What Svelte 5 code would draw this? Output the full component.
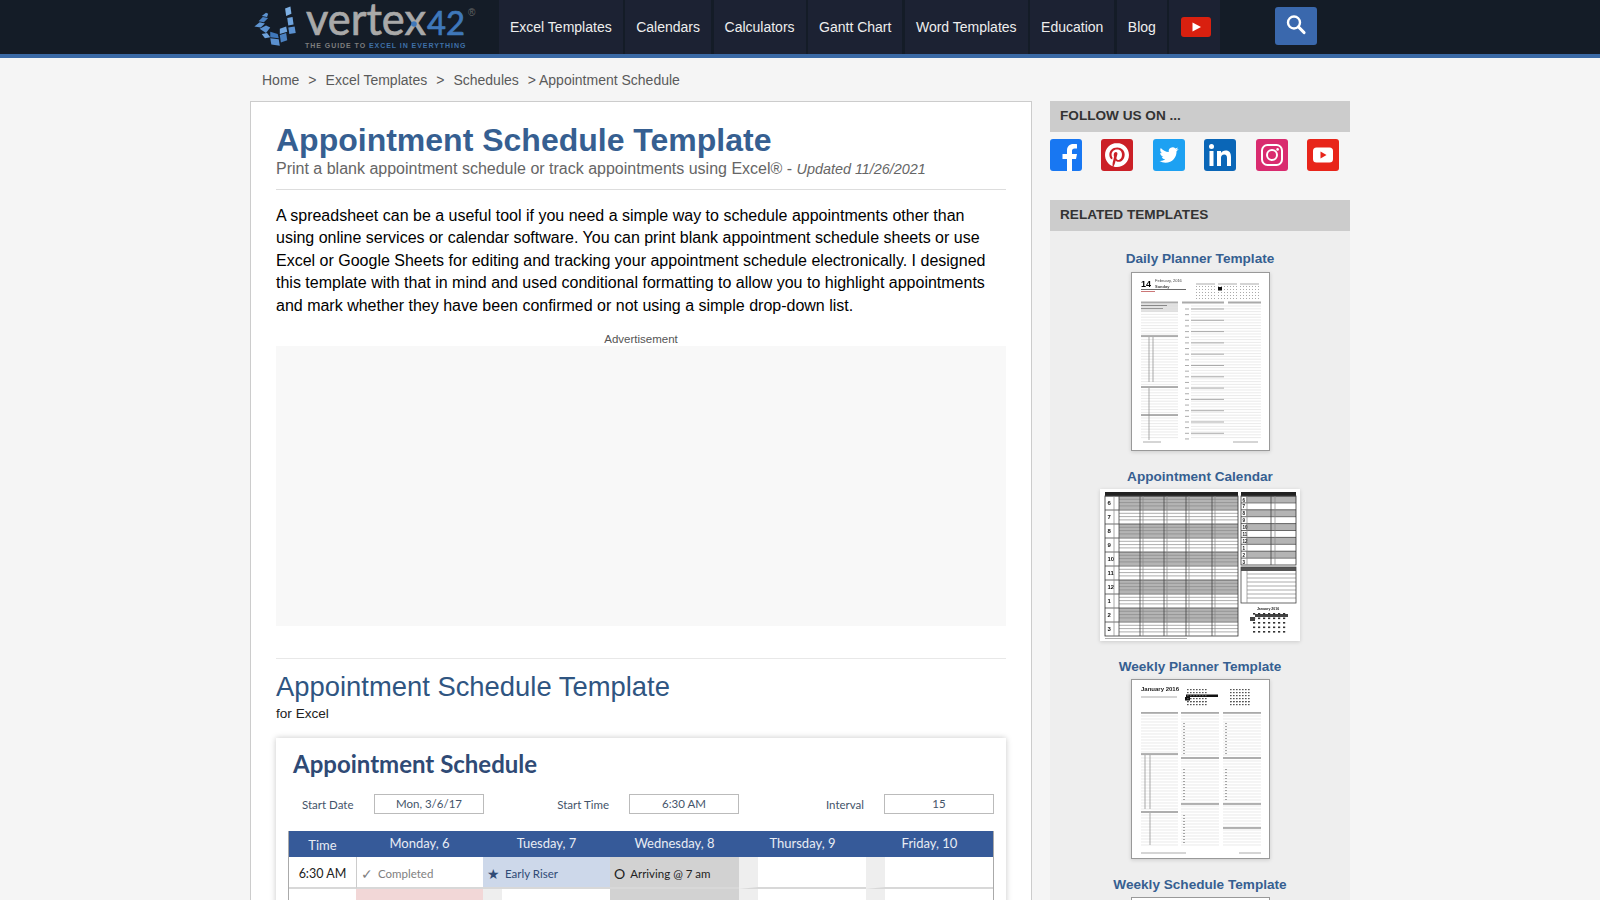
<script>
  const nav = ['Excel Templates', 'Calendars', 'Calculators', 'Gantt Chart', 'Word Templates', 'Education', 'Blog'];
  const range = (from, to, step) => {
    const out = [];
    for (let v = from; v <= to; v += step) out.push(v);
    return out;
  };
  // logo tiles, in px from the left edge of the logo
  const tiles = [
    ['6,26 11,22 16,23 12,27', '#5f95d2'],
    ['10,21 14,17 19,18 15,22', '#4a80c0'],
    ['13,16 17,13 19,14 18,17', '#5f95d2'],
    ['11,28 17,25 21,27 17,32', '#5a90cf'],
    ['13,33 18,32 21,36 16,37', '#6fa3dc'],
    ['21,31 28,33 29,37 21,36', '#3f78bb'],
    ['21,37 29,38 30,44 22,43', '#5a90cf'],
    ['30,34 36,32 37,39 31,41', '#4a80c0'],
    ['30,28 36,26 37,31 30,33', '#6fa3dc'],
    ['38,27 44,26 45,32 39,33', '#5a90cf'],
    ['37,18 42,17 43,24 38,25', '#6fa3dc'],
    ['35,9 40,7 41,14 36,16', '#7eb0e4']
  ];
  const miniDots = (x, y) => range(0, 4, 1).flatMap((r) => range(0, 6, 1).map((c) => [x + c * 3, y + r * 3]));
  const calHours = [6, 7, 8, 9, 10, 11, 12, 1, 2, 3];
  const calCols = [40, 64, 86, 112];
  const schedule = [
    { time: '6:30 AM', cells: [
      { cls: 'plain', mark: '✓', text: 'Completed', textCls: 'muted' },
      { cls: 'blue', mark: '★', text: 'Early Riser', textCls: 'navy' },
      { cls: 'grey', mark: 'O', text: 'Arriving @ 7 am', textCls: 'dark' },
      { cls: 'strip' }, { cls: 'strip' }
    ] },
    { time: '', cells: [{ cls: 'pink' }, { cls: 'strip' }, { cls: 'grey' }, { cls: 'strip' }, { cls: 'strip' }] }
  ];
</script>

<header class="topbar">
  <div class="topbar-inner">
    <a class="logo" href="#top" aria-label="Vertex42">
      <svg width="230" height="54" viewBox="0 0 230 54">
        <g transform="translate(-2 -1) scale(1.06)">
          {#each tiles as [points, fill]}
            <polygon {points} {fill} />
          {/each}
        </g>
        <text x="56" y="35" class="logo-word" textLength="120" lengthAdjust="spacingAndGlyphs">vertex</text>
        <circle cx="164" cy="24" r="2.800" fill="#3f78ba" />
        <text x="177" y="35" class="logo-num" textLength="38" lengthAdjust="spacingAndGlyphs">42</text>
        <text x="218" y="16" class="logo-reg">®</text>
        <text x="55" y="48" class="logo-tag">THE GUIDE TO <tspan fill="#3f70a8">EXCEL IN EVERYTHING</tspan></text>
      </svg>
    </a>
    <nav class="menu">
      {#each nav as item}
        <a href="#top">{item}</a>
      {/each}
      <a href="#top" class="yt" aria-label="YouTube">
        <svg width="30" height="20" viewBox="0 0 30 20">
          <rect width="30" height="20" rx="3" fill="#d9200f" />
          <polygon points="11.500,5.500 20,10 11.500,14.500" fill="#fff" />
        </svg>
      </a>
    </nav>
    <button class="search" aria-label="Search">
      <svg width="24" height="24" viewBox="0 0 24 24" fill="none" stroke="#fff">
        <circle cx="10" cy="8.500" r="6" stroke-width="2.400" />
        <line x1="14.600" y1="13" x2="20" y2="18.500" stroke-width="3.200" stroke-linecap="round" />
      </svg>
    </button>
  </div>
</header>

<div class="page">
  <div class="crumbs">
    <a href="#top">Home</a><span class="sep">&gt;</span><a href="#top">Excel Templates</a><span class="sep">&gt;</span><a href="#top">Schedules</a><span class="sep last">&gt;</span>Appointment Schedule
  </div>

  <div class="columns">
    <main class="card">
      <h1>Appointment Schedule Template</h1>
      <p class="sub">Print a blank appointment schedule or track appointments using Excel® - <em>Updated 11/26/2021</em></p>
      <hr class="rule-top" />
      <p class="intro">A spreadsheet can be a useful tool if you need a simple way to schedule appointments other than using online services or calendar software. You can print blank appointment schedule sheets or use Excel or Google Sheets for editing and tracking your appointment schedule electronically. I designed this template with that in mind and used conditional formatting to allow you to highlight appointments and mark whether they have been confirmed or not using a simple drop-down list.</p>
      <div class="ad-label">Advertisement</div>
      <div class="ad"></div>
      <hr class="rule-mid" />
      <h2>Appointment Schedule Template</h2>
      <p class="for">for Excel</p>

      <div class="sheet">
        <div class="sheet-title">Appointment Schedule</div>
        <div class="fields">
          <span class="lbl first">Start Date</span><span class="box">Mon, 3/6/17</span>
          <span class="lbl">Start Time</span><span class="box">6:30 AM</span>
          <span class="lbl">Interval</span><span class="box">15</span>
        </div>
        <div class="table">
          <div class="th time">Time</div>
          <div class="th">Monday, 6</div>
          <div class="th">Tuesday, 7</div>
          <div class="th">Wednesday, 8</div>
          <div class="th">Thursday, 9</div>
          <div class="th">Friday, 10</div>
          {#each schedule as row}
            <div class="td tm">{row.time}</div>
            {#each row.cells as cell}
              <div class="td {cell.cls}">
                {#if cell.text}
                  <span class="mark {cell.textCls}">{cell.mark}</span><span class={cell.textCls}>{cell.text}</span>
                {/if}
              </div>
            {/each}
          {/each}
        </div>
      </div>
    </main>

    <aside class="side">
      <div class="side-head">Follow us on ...</div>
      <div class="social">
        <a href="#top" aria-label="Facebook"><svg width="32" height="32" viewBox="0 0 32 32">
          <rect width="32" height="32" rx="3" fill="#1877f2" />
          <path d="M22 32V20h4l1-5h-5v-3c0-1.600.8-2.500 2.600-2.500H27V5.200C26.200 5 24.800 5 23.400 5 19.500 5 17 7.400 17 11.500V15h-4.500v5H17v12z" fill="#fff" />
        </svg></a>
        <a href="#top" aria-label="Pinterest"><svg width="32" height="32" viewBox="0 0 32 32">
          <rect width="32" height="32" rx="3" fill="#cb2027" />
          <g transform="translate(4 4)"><path d="M12.017 0C5.396 0 .029 5.367.029 11.987c0 5.079 3.158 9.417 7.618 11.162-.105-.949-.199-2.403.041-3.439.219-.937 1.406-5.957 1.406-5.957s-.359-.72-.359-1.781c0-1.663.967-2.911 2.168-2.911 1.024 0 1.518.769 1.518 1.688 0 1.029-.653 2.567-.992 3.992-.285 1.193.6 2.165 1.775 2.165 2.128 0 3.768-2.245 3.768-5.487 0-2.861-2.063-4.869-5.008-4.869-3.41 0-5.409 2.562-5.409 5.199 0 1.033.394 2.143.889 2.741.099.12.112.225.085.345-.09.375-.293 1.199-.334 1.363-.053.225-.172.271-.401.165-1.495-.69-2.433-2.878-2.433-4.646 0-3.776 2.748-7.252 7.92-7.252 4.158 0 7.392 2.967 7.392 6.923 0 4.135-2.607 7.462-6.233 7.462-1.214 0-2.354-.629-2.758-1.379l-.749 2.848c-.269 1.045-1.004 2.352-1.498 3.146 1.123.345 2.306.535 3.55.535 6.607 0 11.985-5.365 11.985-11.987C23.97 5.39 18.592.026 11.985.026L12.017 0z" fill="#fff" /></g>
        </svg></a>
        <a href="#top" aria-label="Twitter"><svg width="32" height="32" viewBox="0 0 32 32">
          <rect width="32" height="32" rx="3" fill="#1da1f2" />
          <g transform="translate(6.500 6.500) scale(.79)"><path d="M23.953 4.57a10 10 0 01-2.825.775 4.958 4.958 0 002.163-2.723c-.951.555-2.005.959-3.127 1.184a4.92 4.92 0 00-8.384 4.482C7.69 8.095 4.067 6.13 1.64 3.162a4.822 4.822 0 00-.666 2.475c0 1.71.87 3.213 2.188 4.096a4.904 4.904 0 01-2.228-.616v.06a4.923 4.923 0 003.946 4.827 4.996 4.996 0 01-2.212.085 4.936 4.936 0 004.604 3.417 9.867 9.867 0 01-6.102 2.105c-.39 0-.779-.023-1.17-.067a13.995 13.995 0 007.557 2.209c9.053 0 13.998-7.496 13.998-13.985 0-.21 0-.42-.015-.63A9.935 9.935 0 0024 4.59z" fill="#fff" /></g>
        </svg></a>
        <a href="#top" aria-label="LinkedIn"><svg width="32" height="32" viewBox="0 0 32 32">
          <rect width="32" height="32" rx="3" fill="#0a66b7" />
          <circle cx="7.500" cy="7.500" r="2.500" fill="#fff" />
          <rect x="5.500" y="12" width="4" height="15" fill="#fff" />
          <path d="M13 12h4v2c.8-1.400 2.500-2.400 4.600-2.400 4 0 5.400 2.600 5.400 6.400v9h-4v-8c0-2-.7-3.500-2.800-3.500s-3.200 1.500-3.200 3.500v8h-4z" fill="#fff" />
        </svg></a>
        <a href="#top" aria-label="Instagram"><svg width="32" height="32" viewBox="0 0 32 32">
          <rect width="32" height="32" rx="3" fill="#d92b6f" />
          <rect x="6" y="6" width="20" height="20" rx="5.500" fill="none" stroke="#fff" stroke-width="2" />
          <circle cx="16" cy="16" r="5" fill="none" stroke="#fff" stroke-width="2" />
          <circle cx="21.600" cy="10.400" r="1.300" fill="#fff" />
        </svg></a>
        <a href="#top" aria-label="YouTube"><svg width="32" height="32" viewBox="0 0 32 32">
          <rect width="32" height="32" rx="3" fill="#e8251a" />
          <rect x="6" y="8.500" width="20" height="15" rx="3.500" fill="#fff" />
          <polygon points="13.500,12.500 19.500,16 13.500,19.500" fill="#e8251a" />
        </svg></a>
      </div>

      <div class="side-head related">Related Templates</div>
      <div class="rel-list">
        <a class="rel-title" href="#top">Daily Planner Template</a>
        <svg class="thumb" width="139" height="179" viewBox="0 0 139 179">
          <rect x=".5" y=".5" width="138" height="178" fill="#fff" stroke="#999" />
          <text x="10" y="15" class="t-big">14</text>
          <text x="24" y="10" class="t-sm">February, 2016</text>
          <text x="24" y="16" class="t-sm b">Sunday</text>
          <line x1="10" y1="17.500" x2="55" y2="17.500" class="ln-d" />
          <line x1="10" y1="19.500" x2="24" y2="19.500" class="ln-r" />
          {#each [65, 87, 109] as x}
            <line x1={x} y1="12" x2={x + 19} y2="12" class="ln-m" />
            {#each miniDots(x, 14) as [dx, dy]}
              <rect x={dx} y={dy} width="1" height="1" fill="#aaa" />
            {/each}
          {/each}
          <rect x="87" y="15" width="4" height="3.500" fill="#111" />
          {#each [[10, 47], [51, 93], [97, 130]] as [a, b]}
            <rect x={a} y="29.500" width={b - a} height="2" fill="#aaa" />
          {/each}
          <rect x="10" y="32" width="37" height="8" fill="#e2e2e2" />
          <line x1="10" y1="33.500" x2="36" y2="33.500" class="ln-d" />
          <line x1="10" y1="36.500" x2="32" y2="36.500" class="ln-d" />
          {#each range(34, 168, 2.800) as y}
            <line x1="60" y1={y} x2="130" y2={y} class="ln-l" />
            <line x1="10" y1={y} x2="47" y2={y} class="ln-l" />
          {/each}
          {#each range(37, 168, 11.300) as y}
            <line x1="60" y1={y} x2="93" y2={y} class="ln-m" />
          {/each}
          {#each [64, 115, 143] as y}
            <line x1="10" y1={y} x2="47" y2={y} class="ln-d" />
          {/each}
          <line x1="18" y1="65" x2="18" y2="110" class="ln-m" />
          <line x1="22" y1="65" x2="22" y2="110" class="ln-m" />
          <line x1="18" y1="116" x2="18" y2="168" class="ln-m" />
          {#each range(37, 168, 5.650) as y}
            <line x1="54" y1={y} x2="58" y2={y} class="ln-m" />
          {/each}
          <line x1="12" y1="170" x2="30" y2="170" class="ln-m" />
          <line x1="102" y1="170" x2="127" y2="170" class="ln-m" />
        </svg>

        <a class="rel-title" href="#top">Appointment Calendar</a>
        <svg class="thumb flat" width="200" height="152" viewBox="0 0 200 152">
          <rect width="200" height="152" fill="#fff" />
          <rect x="5" y="3" width="133" height="4" fill="#222" />
          <rect x="141" y="3" width="55" height="4" fill="#222" />
          {#each calHours as h, i}
            <g>
              {#if i % 2 === 0}
                <rect x="19" y={7 + i * 14} width="119" height="13.500" fill="#b4b4b4" />
              {/if}
              {#each range(3.300, 13, 3.300) as d}
                <line x1="19" y1={7 + i * 14 + d} x2="138" y2={7 + i * 14 + d} class="ln-m" />
              {/each}
              <line x1="5" y1={7 + i * 14} x2="138" y2={7 + i * 14} class="ln-d" />
              <text x="7.500" y={16 + i * 14} class="t-hr">{h}</text>
            </g>
          {/each}
          <rect x="5" y="7" width="133" height="140" fill="none" stroke="#333" stroke-width=".8" />
          <line x1="14" y1="7" x2="14" y2="147" class="ln-m" />
          <line x1="19" y1="7" x2="19" y2="147" class="ln-d" />
          {#each calCols as x}
            <line x1={x} y1="7" x2={x} y2="147" class="ln-d" />
            <line x1={x + 3} y1="7" x2={x + 3} y2="147" class="ln-m" />
          {/each}
          {#each range(0, 9, 1) as i}
            <rect x="146" y={7 + i * 6.900} width="50" height="6.500" fill={i % 2 === 0 ? '#b4b4b4' : '#fff'} />
            <line x1="141" y1={7 + i * 6.900} x2="196" y2={7 + i * 6.900} class="ln-d" />
            <text x="142.500" y={12.500 + i * 6.900} class="t-hr s">{calHours[i]}</text>
          {/each}
          <rect x="141" y="7" width="55" height="69" fill="none" stroke="#333" stroke-width=".8" />
          <line x1="147" y1="7" x2="147" y2="76" class="ln-m" />
          <line x1="171" y1="7" x2="171" y2="76" class="ln-d" />
          <line x1="175" y1="7" x2="175" y2="76" class="ln-m" />
          <rect x="141" y="78" width="55" height="4" fill="#555" />
          {#each range(85, 112, 4) as y}
            <line x1="147" y1={y} x2="196" y2={y} class="ln-m" />
          {/each}
          <rect x="141" y="78" width="55" height="36" fill="none" stroke="#444" stroke-width=".8" />
          <line x1="147" y1="82" x2="147" y2="114" class="ln-m" />
          <text x="168" y="121" class="t-xs" text-anchor="middle">January 2016</text>
          <rect x="155" y="125" width="33" height="3" fill="#444" />
          {#each range(0, 4, 1) as r}
            {#each range(0, 6, 1) as c}
              <rect x={153 + c * 5} y={124 + r * 4.500} width="2.200" height="1.600" fill="#333" />
            {/each}
          {/each}
          <rect x="150" y="128" width="5" height="4" fill="#444" />
          <line x1="5" y1="149.500" x2="87" y2="149.500" class="ln-m" />
        </svg>

        <a class="rel-title" href="#top">Weekly Planner Template</a>
        <svg class="thumb" width="139" height="180" viewBox="0 0 139 180">
          <rect x=".5" y=".5" width="138" height="179" fill="#fff" stroke="#999" />
          <text x="10" y="12" class="t-wk">January 2016</text>
          <line x1="10" y1="18" x2="46" y2="18" class="ln-m" />
          <rect x="55" y="15.500" width="32" height="2.500" fill="#111" />
          <rect x="54" y="18" width="5" height="3.500" fill="#111" />
          {#each [56, 97] as x}
            {#each miniDots(x, 10) as [dx, dy]}
              <rect x={dx + (x === 97 ? 2 : 0)} y={dy} width="1.600" height="1.200" fill="#555" />
            {/each}
            {#each miniDots(x, 22) as [dx, dy]}
              {#if dy < 26}
                <rect x={dx + (x === 97 ? 2 : 0)} y={dy} width="1.600" height="1.200" fill="#555" />
              {/if}
            {/each}
          {/each}
          {#each [[10, 47], [50, 88], [92, 130]] as [a, b]}
            <rect x={a} y="33" width={b - a} height="1.800" fill="#aaa" />
            {#each range(37, 166, 3) as y}
              <line x1={a} y1={y} x2={b} y2={y} class="ln-l" />
            {/each}
          {/each}
          {#each [79, 125] as y}
            <line x1="50" y1={y} x2="88" y2={y} class="ln-d" />
            <line x1="92" y1={y} x2="130" y2={y} class="ln-d" />
          {/each}
          <line x1="92" y1="149" x2="130" y2="149" class="ln-d" />
          <line x1="10" y1="75" x2="47" y2="75" class="ln-d" />
          <line x1="10" y1="133" x2="47" y2="133" class="ln-d" />
          <line x1="14" y1="76" x2="14" y2="130" class="ln-m" />
          <line x1="19" y1="76" x2="19" y2="130" class="ln-m" />
          <line x1="19" y1="134" x2="19" y2="166" class="ln-m" />
          {#each [[44, 75], [90, 121], [136, 166]] as [a, b]}
            <line x1="53" y1={a} x2="53" y2={b} stroke="#555" stroke-width="1" stroke-dasharray="1 2" />
          {/each}
          {#each [[44, 75], [90, 121]] as [a, b]}
            <line x1="95" y1={a} x2="95" y2={b} stroke="#555" stroke-width="1" stroke-dasharray="1 2" />
          {/each}
          <line x1="10" y1="174" x2="55" y2="174" class="ln-m" />
          <line x1="108" y1="174" x2="130" y2="174" class="ln-m" />
        </svg>

        <a class="rel-title" href="#top">Weekly Schedule Template</a>
        <div class="thumb-stub"></div>
      </div>
    </aside>
  </div>
</div>

<style>
  :global(html) {
    overflow: hidden;
  }

  :global(body) {
    background: #f5f5f5;
    font-family: "Liberation Sans", Arial, sans-serif;
  }

  a {
    text-decoration: none;
    color: inherit;
  }

  /* Top bar */
  .topbar {
    background: #141c27;
    border-bottom: 4px solid #3a69a5;
    height: 54px;
  }

  .topbar-inner {
    width: 1100px;
    margin: 0 auto;
    height: 54px;
    display: flex;
  }

  .logo {
    width: 249px;
    flex: none;
  }

  .logo-word {
    font-family: Lato, sans-serif;
    font-size: 44px;
    fill: #a9a9a9;
    stroke: #a9a9a9;
    stroke-width: 0.7;
  }

  .logo-num {
    font-family: Lato, sans-serif;
    font-size: 32px;
    fill: #3f78ba;
    stroke: #3f78ba;
    stroke-width: 0.7;
  }

  .logo-reg {
    font-size: 10px;
    fill: #666;
  }

  .logo-tag {
    font-family: "Liberation Sans", sans-serif;
    font-size: 7px;
    font-weight: 700;
    letter-spacing: 0.950px;
    fill: #7d7d7d;
  }

  .menu {
    display: flex;
    height: 54px;
    gap: 2.500px;
  }

  .menu a {
    display: flex;
    align-items: center;
    background: #1c2233;
    color: #eee;
    font-size: 14px;
    padding: 0 11px;
  }

  .menu .yt {
    padding: 0 9px 0 12px;
  }

  .search {
    width: 42px;
    height: 38px;
    margin: 7px 0 0 55px;
    padding: 0;
    background: #3a68ad;
    border: 0;
    border-radius: 3px;
    display: flex;
    align-items: center;
    justify-content: center;
  }

  /* Breadcrumbs */
  .page {
    width: 1100px;
    margin: 0 auto;
  }

  .crumbs {
    height: 43px;
    line-height: 44px;
    padding-left: 12px;
    font-size: 14px;
    color: #5a5a5a;
  }

  .sep {
    margin: 0 9px;
  }

  .sep.last {
    margin-right: 3px;
  }

  .columns {
    display: flex;
    gap: 18px;
    align-items: flex-start;
  }

  /* Main card */
  .card {
    width: 782px;
    box-sizing: border-box;
    background: #fff;
    border: 1px solid #ccc;
    padding: 20px 25px 0;
  }

  h1 {
    margin: 0;
    font-size: 32px;
    line-height: 36px;
    color: #365f91;
  }

  .sub {
    margin: 0;
    font-size: 16px;
    line-height: 22px;
    color: #666;
  }

  .sub em {
    font-size: 14.400px;
  }

  .rule-top {
    margin: 9px 0 15px;
    border: 0;
    border-top: 1px solid #ddd;
  }

  .intro {
    margin: 0;
    font-size: 16px;
    line-height: 22.400px;
    color: #000;
  }

  .ad-label {
    margin-top: 15px;
    font-size: 11.500px;
    line-height: 14px;
    text-align: center;
    color: #555;
  }

  .ad {
    height: 280px;
    background: #f8f8f8;
  }

  .rule-mid {
    margin: 32px 0 0;
    border: 0;
    border-top: 1px solid #e8e8e8;
  }

  h2 {
    margin: 12px 0 0;
    font-size: 27.400px;
    font-weight: 400;
    line-height: 32px;
    color: #2f5581;
  }

  .for {
    margin: 2px 0 0;
    font-size: 13.600px;
    line-height: 18px;
    color: #222;
  }

  /* Schedule preview */
  .sheet {
    margin-top: 15px;
    height: 300px;
    box-sizing: border-box;
    padding: 12px 12px 0;
    background: #fff;
    box-shadow: 0 0 6px rgba(0, 0, 0, 0.22);
    font-family: Lato, sans-serif;
  }

  .sheet-title {
    padding-left: 5px;
    font-size: 24px;
    font-weight: 700;
    line-height: 28px;
    color: #2f4a75;
  }

  .fields {
    display: grid;
    grid-template-columns: 86px 110px 145px 110px 145px 110px;
    margin-top: 16px;
    margin-right: -1px;
    align-items: center;
    font-size: 11.500px;
    color: #44546a;
  }

  .lbl {
    text-align: right;
    padding-right: 20px;
  }

  .lbl.first {
    padding-right: 0;
    text-align: left;
    padding-left: 14px;
  }

  .box {
    height: 18px;
    line-height: 18px;
    text-align: center;
    background: #fff;
    border: 1px solid #bbb;
  }

  .table {
    display: grid;
    grid-template-columns: 67px 127px 127px 129px 127px 127px;
    grid-template-rows: 26px 32px 32px;
    margin-top: 17px;
    border-left: 1px solid #aaa;
    border-right: 1px solid #aaa;
    font-size: 13px;
  }

  .th {
    background: #365a99;
    color: #e8ecf4;
    text-align: center;
    line-height: 25px;
  }

  .th.time {
    line-height: 29px;
  }

  .td {
    box-sizing: border-box;
    border-bottom: 2px solid #d8d8d8;
    border-left: 1px solid #ccc;
    display: flex;
    align-items: center;
    padding-top: 3px;
    font-size: 11.500px;
  }

  .tm {
    border-left: 0;
    justify-content: center;
    font-size: 12.500px;
    color: #222;
  }

  .plain {
    background: #fff;
  }

  .blue {
    background: #cdd8ea;
    border-left: 0;
  }

  .grey {
    background: #d2d2d2;
    border-left: 0;
  }

  .pink {
    background: #f2d7d7;
    border-left: 0;
  }

  .strip {
    background: #fff;
    border-left: 19px solid #eee;
  }

  .mark {
    padding: 0 5px 0 4px;
    font-size: 14px;
  }

  .muted {
    color: #808080;
  }

  .navy {
    color: #2f4a75;
  }

  .dark {
    color: #222;
  }

  /* Sidebar */
  .side {
    width: 300px;
    flex: none;
  }

  .side-head {
    height: 31px;
    line-height: 30px;
    padding-left: 10px;
    background: #ccc;
    font-size: 13.600px;
    font-weight: 700;
    text-transform: uppercase;
    color: #333;
  }

  .social {
    display: flex;
    justify-content: space-between;
    padding: 7px 11px 0 0;
    height: 68px;
    box-sizing: border-box;
  }

  .social a {
    display: block;
    height: 32px;
  }

  .rel-list {
    background: #eee;
    padding-top: 19px;
    height: 720px;
    display: flex;
    flex-direction: column;
    align-items: center;
  }

  .rel-title {
    flex: none;
    font-size: 13.600px;
    font-weight: 700;
    line-height: 18px;
    color: #365f91;
    margin-bottom: 3px;
  }

  .rel-title:first-child {
    margin-bottom: 4px;
  }

  .thumb {
    display: block;
    flex: none;
    margin-bottom: 17px;
    box-shadow: 0 1px 4px rgba(0, 0, 0, 0.15);
    filter: blur(0.35px);
  }

  .thumb-stub {
    flex: none;
    width: 139px;
    height: 100px;
    background: #fff;
    border: 1px solid #999;
    box-sizing: border-box;
  }

  .t-big {
    font-size: 9px;
    font-weight: 700;
  }

  .t-sm {
    font-size: 4px;
    fill: #444;
  }

  .b {
    font-weight: 700;
  }

  .t-wk {
    font-size: 6px;
    font-weight: 700;
    fill: #222;
  }

  .t-hr {
    font-size: 6px;
    font-weight: 700;
    fill: #111;
  }

  .t-hr.s {
    font-size: 4.500px;
  }

  .t-xs {
    font-size: 3.500px;
    font-weight: 700;
    fill: #222;
  }

  .ln-d {
    stroke: #444;
    stroke-width: 0.8;
  }

  .ln-m {
    stroke: #888;
    stroke-width: 0.7;
  }

  .ln-l {
    stroke: #dcdcdc;
    stroke-width: 0.6;
  }

  .ln-r {
    stroke: #c77;
    stroke-width: 1;
  }
</style>
